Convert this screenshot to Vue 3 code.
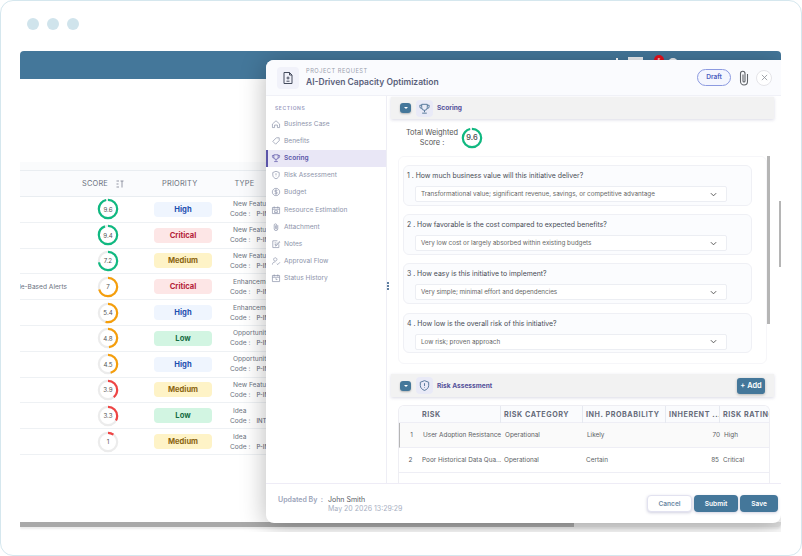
<script setup>
const rows = [
  { name: '', score: 9.6, priority: 'High', type: 'New Feature', code: 'P-INT-014' },
  { name: '', score: 9.4, priority: 'Critical', type: 'New Feature', code: 'P-INT-011' },
  { name: '', score: 7.2, priority: 'Medium', type: 'New Feature', code: 'P-INT-009' },
  { name: 'Role-Based Alerts', score: 7, priority: 'Critical', type: 'Enhancement', code: 'P-INT-008' },
  { name: '', score: 5.4, priority: 'High', type: 'Enhancement', code: 'P-INT-007' },
  { name: '', score: 4.8, priority: 'Low', type: 'Opportunity', code: 'P-INT-006' },
  { name: '', score: 4.5, priority: 'High', type: 'Opportunity', code: 'P-INT-005' },
  { name: '', score: 3.9, priority: 'Medium', type: 'New Feature', code: 'P-INT-004' },
  { name: '', score: 3.3, priority: 'Low', type: 'Idea', code: 'INT-003' },
  { name: '', score: 1, priority: 'Medium', type: 'Idea', code: 'P-INT-002' }
]

const sections = [
  { label: 'Business Case', d: 'M2 7 L7 2.5 L12 7 V12 H9 V8.5 H5 V12 H2 Z' },
  { label: 'Benefits', d: 'M7.5 2.5 H11.5 V6.5 L6.5 11.5 L2.5 7.5 Z M9.6 4.4 h.1' },
  { label: 'Scoring', d: 'M4 2.5 H10 V6 A3 3 0 0 1 4 6 Z M4 3.5 H2 V5 A2 2 0 0 0 4 7 M10 3.5 H12 V5 A2 2 0 0 1 10 7 M7 9 V11 M4.5 12 H9.5' },
  { label: 'Risk Assessment', d: 'M7 1.8 L11.5 3.5 V7 C11.5 9.6 9.5 11.4 7 12.3 C4.5 11.4 2.5 9.6 2.5 7 V3.5 Z M7 4.5 V7.5 M7 9 V9.4' },
  { label: 'Budget', d: 'M7 1.8 A5.2 5.2 0 1 0 7.01 1.8 Z M9 5 C8.4 4.2 5 4 5 5.7 C5 7.5 9 6.5 9 8.3 C9 10 5.6 9.8 5 9 M7 3.4 V10.6' },
  { label: 'Resource Estimation', d: 'M2 3.5 H12 V12 H2 Z M4.5 2 V5 M9.5 2 V5 M2 6 H12 M5 8 H9 V10.5 H5 Z' },
  { label: 'Attachment', d: 'M9.5 4.5 V9.5 A2.5 2.5 0 0 1 4.5 9.5 V4 A1.8 1.8 0 0 1 8 4 V9 A.8 .8 0 0 1 6.4 9 V4.8' },
  { label: 'Notes', d: 'M11 7.5 V12 H2.5 V2.5 H9 M5 5.5 H7.5 M5 8 H7 M6.5 10 L7 8 L11.5 3.5 L12.5 4.5 L8 9 Z' },
  { label: 'Approval Flow', d: 'M6 2.5 A2.3 2.3 0 1 0 6.01 2.5 Z M2 12 C2 9.5 3.8 8.3 6 8.3 M8 10.5 L9.5 12 L12.5 8.8' },
  { label: 'Status History', d: 'M2 3.5 H12 V12 H2 Z M4.5 2 V5 M9.5 2 V5 M2 6 H12 M7 7.2 V9.2 H9' }
]

const questions = [
  { q: 'How much business value will this initiative deliver?', a: 'Transformational value; significant revenue, savings, or competitive advantage' },
  { q: 'How favorable is the cost compared to expected benefits?', a: 'Very low cost or largely absorbed within existing budgets' },
  { q: 'How easy is this initiative to implement?', a: 'Very simple; minimal effort and dependencies' },
  { q: 'How low is the overall risk of this initiative?', a: 'Low risk; proven approach' }
]

const risks = [
  { risk: 'User Adoption Resistance', cat: 'Operational', prob: 'Likely', inherent: 70, rating: 'High' },
  { risk: 'Poor Historical Data Qua...', cat: 'Operational', prob: 'Certain', inherent: 85, rating: 'Critical' }
]

const circ = 2 * Math.PI * 10

function dash(score) {
  return `${(score / 10) * circ} ${circ}`
}

function ringColor(score) {
  if (score >= 7.2) return '#10b981'
  if (score >= 4) return '#f59e0b'
  return '#ef4444'
}
</script>

<template>
  <div class="frame">
    <div class="dots">
      <span></span><span></span><span></span>
    </div>

    <div class="window">
      <div class="topbar">
        <span class="tb-small"></span>
        <span class="tb-box"></span>
        <span class="tb-badge">5</span>
        <span class="tb-avatar"></span>
      </div>

      <div class="table">
        <div class="band"></div>
        <div class="thead">
          <span class="th-score">SCORE</span>
          <svg class="sort" viewBox="0 0 8 8" width="8" height="8">
            <path d="M0.5 1 H3 M0.5 4 H2.5 M0.5 7 H3 M4.5 1 H7.5 M6 1 V7.5" fill="none" stroke="#7b8290" stroke-width="0.8" />
          </svg>
          <span class="th-priority">PRIORITY</span>
          <span class="th-type">TYPE</span>
        </div>
        <div v-for="r in rows" :key="r.code" class="row">
          <div class="cell-name"><span>{{ r.name }}</span></div>
          <div class="ring">
            <svg viewBox="0 0 24 24" width="22" height="22">
              <circle cx="12" cy="12" r="10" fill="none" stroke="#ececec" stroke-width="2.4" />
              <circle
                cx="12" cy="12" r="10" fill="none"
                :stroke="ringColor(r.score)" stroke-width="2.4"
                :stroke-dasharray="dash(r.score)"
                transform="rotate(-90 12 12)"
              />
            </svg>
            <span>{{ r.score }}</span>
          </div>
          <span class="pill" :class="r.priority.toLowerCase()">{{ r.priority }}</span>
          <div class="type">
            <div class="type-name">{{ r.type }}</div>
            <div class="type-code"><span>Code :</span><b>{{ r.code }}</b></div>
          </div>
        </div>
      </div>

      <div class="hscroll"><div class="hthumb"></div></div>

      <!-- modal drawer over the list -->
      <div class="modal">
        <header class="m-head">
          <div class="doc-icon">
            <svg viewBox="0 0 14 14" width="14" height="14">
              <path d="M3 1.5 H8.5 L11 4 V12.5 H3 Z M8.5 1.5 V4 H11 M7 5.5 V8.5 M5.5 7 H8.5 M5.5 10.2 H8.5" fill="none" stroke="#444b5c" stroke-width="1" />
            </svg>
          </div>
          <div class="m-titles">
            <div class="m-over">PROJECT REQUEST</div>
            <div class="m-title">AI-Driven Capacity Optimization</div>
          </div>
          <span class="draft">Draft</span>
          <svg class="clip" viewBox="0 0 10 16" width="10" height="16">
            <path d="M8.5 4 V11.5 A3.5 3.5 0 0 1 1.5 11.5 V3.5 A2.2 2.2 0 0 1 6 3.5 V11 A1 1 0 0 1 4 11 V4.5" fill="none" stroke="#5f6368" stroke-width="1.1" />
          </svg>
          <button class="close">
            <svg viewBox="0 0 8 8" width="7" height="7">
              <path d="M1 1 L7 7 M7 1 L1 7" stroke="#8b8f97" stroke-width="0.9" />
            </svg>
          </button>
        </header>

        <div class="m-body">
          <aside class="side">
            <div class="side-title">SECTIONS</div>
            <a v-for="s in sections" :key="s.label" class="side-item" :class="{ active: s.label === 'Scoring' }">
              <svg viewBox="0 0 14 14" width="10" height="10">
                <path :d="s.d" fill="none" stroke="currentColor" stroke-width="1" />
              </svg>
              <span>{{ s.label }}</span>
            </a>
          </aside>

          <span class="grip"><i></i><i></i><i></i></span>

          <main class="content">
            <div class="sec-head">
              <span class="toggle"></span>
              <span class="sec-icon">
                <svg viewBox="0 0 14 14" width="13" height="13">
                  <path d="M4 2.5 H10 V6 A3 3 0 0 1 4 6 Z M4 3.5 H2 V5 A2 2 0 0 0 4 7 M10 3.5 H12 V5 A2 2 0 0 1 10 7 M7 9 V11 M4.5 12 H9.5" fill="none" stroke="#4f7396" stroke-width="1" />
                </svg>
              </span>
              <span class="sec-name">Scoring</span>
            </div>

            <div class="total">
              <div class="total-label">Total Weighted<br />Score :</div>
              <div class="ring total-ring">
                <svg viewBox="0 0 24 24" width="22" height="22">
                  <circle cx="12" cy="12" r="10" fill="none" stroke="#ececec" stroke-width="2.4" />
                  <circle cx="12" cy="12" r="10" fill="none" stroke="#10b981" stroke-width="2.4" :stroke-dasharray="dash(9.6)" transform="rotate(-90 12 12)" />
                </svg>
                <span>9.6</span>
              </div>
            </div>

            <div class="q-panel">
              <div v-for="(item, i) in questions" :key="item.q" class="q-card">
                <div class="q-text">{{ i + 1 }} . {{ item.q }}</div>
                <div class="q-select">
                  <span>{{ item.a }}</span>
                  <svg viewBox="0 0 8 5" width="7" height="5">
                    <path d="M1 1 L4 4 L7 1" fill="none" stroke="#555" stroke-width="1.1" />
                  </svg>
                </div>
              </div>
            </div>

            <div class="sec-head risk-head">
              <span class="toggle"></span>
              <span class="sec-icon">
                <svg viewBox="0 0 14 14" width="13" height="13">
                  <path d="M7 1.8 L11.5 3.5 V7 C11.5 9.6 9.5 11.4 7 12.3 C4.5 11.4 2.5 9.6 2.5 7 V3.5 Z M7 4.5 V7.5 M7 9 V9.6" fill="none" stroke="#4f7396" stroke-width="1" />
                </svg>
              </span>
              <span class="sec-name">Risk Assessment</span>
              <button class="add">+ Add</button>
            </div>

            <div class="risk-table">
              <div class="risk-row risk-th">
                <span></span>
                <span>RISK</span>
                <span>RISK CATEGORY</span>
                <span>INH. PROBABILITY</span>
                <span>INHERENT ...</span>
                <span>RISK RATING</span>
              </div>
              <div v-for="(r, i) in risks" :key="r.risk" class="risk-row" :class="{ selected: i === 0 }">
                <span class="num">{{ i + 1 }}</span>
                <span class="risk-name">{{ r.risk }}</span>
                <span>{{ r.cat }}</span>
                <span>{{ r.prob }}</span>
                <span class="right">{{ r.inherent }}</span>
                <span>{{ r.rating }}</span>
              </div>
            </div>

            <div class="vscroll"></div>
            <div class="vscroll-2"></div>
          </main>
        </div>

        <footer class="m-foot">
          <span class="upd">Updated By&nbsp; :</span>
          <div class="upd-who">
            <div class="upd-name">John Smith</div>
            <div class="upd-date">May 20 2026 13:29:29</div>
          </div>
          <button class="btn cancel">Cancel</button>
          <button class="btn">Submit</button>
          <button class="btn save">Save</button>
        </footer>
      </div>
    </div>
  </div>
</template>

<style>
html,
body {
  margin: 0;
  background: #fff;
}
</style>

<style scoped>
* {
  box-sizing: border-box;
}

.frame {
  width: 802px;
  height: 556px;
  border: 1px solid #d5e7ee;
  border-radius: 13px;
  padding: 17px 20px 0 19px;
  overflow: hidden;
  font-family: Inter, "Noto Sans", sans-serif;
  background: #fff;
}

.dots {
  display: flex;
  gap: 8px;
  margin-left: 7px;
  height: 12px;
}

.dots span {
  width: 12px;
  height: 12px;
  border-radius: 50%;
  background: #d0e4ec;
}

.window {
  position: relative;
  margin-top: 21px;
  height: 481px;
  display: flex;
  flex-direction: column;
  overflow: hidden;
  border-radius: 4px 4px 0 0;
}

.topbar {
  height: 28px;
  flex: none;
  background: #44779a;
  display: flex;
  justify-content: flex-end;
  padding: 4px 103px 0 0;
}

.tb-small {
  width: 2px;
  height: 4px;
  margin: 3px 10px 0 0;
  background: #fff;
}

.tb-box {
  width: 15px;
  height: 12px;
  margin: 2px 11px 0 0;
  background: #eef1f4;
}

.tb-badge {
  width: 10px;
  height: 10px;
  border-radius: 50%;
  background: #e8101c;
  color: #fff;
  font-size: 5px;
  line-height: 10px;
  text-align: center;
}

.tb-avatar {
  width: 10px;
  height: 10px;
  margin: 3px 0 0 4px;
  border-radius: 50%;
  background: #eef1f4;
}

.table {
  margin-top: 83px;
}

.band {
  height: 8px;
  background: #fafbfc;
}

.thead {
  height: 27px;
  display: flex;
  align-items: center;
  background: #fafbfd;
  border-top: 1px solid #e9edf1;
  border-bottom: 1px solid #e9edf1;
  font-size: 7.4px;
  color: #6b7280;
  letter-spacing: 0.2px;
}

.th-score {
  margin-left: 62px;
}

.sort {
  margin-left: 8px;
}

.th-priority {
  margin-left: 38px;
}

.th-type {
  margin-left: 37px;
}

.row {
  height: 25.8px;
  display: flex;
  align-items: center;
  border-bottom: 1px solid #eef1f4;
}

.cell-name {
  width: 77px;
  flex: none;
  display: flex;
  justify-content: flex-end;
  overflow: hidden;
  white-space: nowrap;
  padding-right: 30px;
  font-size: 6.6px;
  color: #6b7280;
}

.ring {
  position: relative;
  width: 22px;
  height: 22px;
  flex: none;
  display: flex;
  align-items: center;
  justify-content: center;
  font-size: 6.2px;
  color: #555;
}

.ring svg {
  position: absolute;
  inset: 0;
}

.pill {
  width: 58px;
  height: 15px;
  margin-left: 35px;
  flex: none;
  border-radius: 4px;
  text-align: center;
  font-size: 7.6px;
  font-weight: 700;
  line-height: 15px;
}

.high {
  background: #eff5fe;
  color: #1d4fb0;
}

.critical {
  background: #fde6e6;
  color: #b4233a;
}

.medium {
  background: #fef3c7;
  color: #8a6510;
}

.low {
  background: #d2f5e2;
  color: #166c45;
}

.type {
  margin-left: 18px;
  font-size: 6.6px;
  color: #6b7280;
  white-space: nowrap;
}

.type-name {
  margin-left: 3px;
  line-height: 10px;
}

.type-code {
  display: flex;
  gap: 6px;
  line-height: 10px;
}

.type-code b {
  font-weight: 500;
  font-size: 6px;
}

.hscroll {
  margin-top: auto;
  margin-bottom: 5px;
  height: 5px;
  background: #e3e3e3;
  box-shadow: 0 2px 2px rgba(0, 0, 0, 0.08);
  border-bottom-right-radius: 4px;
}

.hthumb {
  width: 554px;
  height: 5px;
  background: #a9a9a9;
}

.modal {
  position: absolute;
  left: 246px;
  top: 9px;
  width: 515px;
  height: 463px;
  display: flex;
  flex-direction: column;
  background: #fff;
  border-radius: 8px 0 8px 8px;
  box-shadow: 0 3px 26px rgba(0, 0, 0, 0.28);
}

.m-head {
  height: 36px;
  flex: none;
  display: flex;
  align-items: center;
  padding: 0 9px 0 11px;
  background: #fafbfe;
  border-radius: 8px 0 0 0;
  border-bottom: 1px solid #f0f1f7;
}

.doc-icon {
  width: 22px;
  height: 22px;
  display: flex;
  align-items: center;
  justify-content: center;
  border-radius: 4px;
  background: #f1f2fa;
}

.m-titles {
  margin-left: 7px;
  flex: 1;
}

.m-over {
  font-size: 5.7px;
  letter-spacing: 0.5px;
  color: #9a9fae;
  line-height: 8px;
}

.m-title {
  font-size: 8.5px;
  font-weight: 600;
  color: #59607a;
  line-height: 12px;
  margin-top: 1px;
}

.draft {
  width: 34px;
  height: 17px;
  border: 1px solid #8c9ae0;
  border-radius: 9px;
  background: #f4f6fe;
  color: #4a5fc0;
  font-size: 6.6px;
  font-weight: 600;
  line-height: 15px;
  text-align: center;
}

.clip {
  margin-left: 8px;
}

.close {
  width: 16px;
  height: 16px;
  margin-left: 7px;
  padding: 0;
  display: flex;
  align-items: center;
  justify-content: center;
  border: 1px solid #e4e4e8;
  border-radius: 50%;
  background: #fff;
}

.m-body {
  flex: 1;
  min-height: 0;
  display: flex;
  position: relative;
}

.side {
  width: 121px;
  flex: none;
  border-right: 1px solid #eeeef5;
  padding-top: 9px;
}

.side-title {
  margin: 0 0 3.5px 9px;
  font-size: 5px;
  font-weight: 600;
  letter-spacing: 0.6px;
  color: #9a9bc0;
  line-height: 7px;
}

.side-item {
  height: 17.1px;
  display: flex;
  align-items: center;
  gap: 3px;
  padding-left: 5px;
  font-size: 6.6px;
  color: #8d94aa;
}

.side-item.active {
  background: #e9e7f6;
  border-left: 2px solid #5b55a8;
  padding-left: 3px;
  color: #5b55a8;
  font-weight: 600;
}

.grip {
  position: absolute;
  left: 121px;
  top: 186px;
  display: flex;
  flex-direction: column;
  gap: 1px;
}

.grip i {
  width: 2px;
  height: 2px;
  background: #5f7fa0;
}

.content {
  position: relative;
  flex: 1;
  min-width: 0;
  overflow: hidden;
  padding: 1px 7px 0 4px;
}

.sec-head {
  height: 22px;
  display: flex;
  align-items: center;
  padding-left: 9px;
  background: #f2f2f2;
  box-shadow: 0 1px 3px rgba(90, 90, 140, 0.22);
}

.toggle {
  width: 11px;
  height: 10px;
  border-radius: 3px;
  background: #44779a;
  display: flex;
  align-items: center;
  justify-content: center;
  box-shadow: 0 1px 2px rgba(0, 0, 0, 0.25);
}

.toggle::before {
  content: "";
  border-left: 2.5px solid transparent;
  border-right: 2.5px solid transparent;
  border-top: 2.5px solid #fff;
}

.sec-icon {
  width: 17px;
  height: 17px;
  margin-left: 5px;
  display: flex;
  align-items: center;
  justify-content: center;
  border-radius: 4px;
  background: #e9eaf7;
}

.sec-name {
  margin-left: 4px;
  font-size: 6.6px;
  font-weight: 700;
  color: #54509a;
}

.total {
  height: 37px;
  display: flex;
  align-items: center;
}

.total-label {
  width: 58px;
  margin-left: 12px;
  text-align: center;
  font-size: 7.4px;
  line-height: 10px;
  color: #555;
  white-space: nowrap;
}

.total-ring {
  margin-left: 0;
  font-size: 7.4px;
  font-weight: 600;
}

.q-panel {
  width: 369px;
  height: 208px;
  margin-left: 7px;
  padding: 8px 14px 0 4px;
  border: 1px solid #f6f6f9;
  border-radius: 6px;
  display: flex;
  flex-direction: column;
  gap: 8.6px;
}

.q-card {
  height: 40.6px;
  padding: 5px 24px 0 3px;
  border: 1px solid #eff0f5;
  border-radius: 6px;
  background: #fbfcfe;
}

.q-text {
  font-size: 6.9px;
  line-height: 9px;
  color: #484c55;
  white-space: nowrap;
}

.q-select {
  height: 16px;
  margin: 6px 0 0 8px;
  padding: 0 9px 0 5px;
  display: flex;
  align-items: center;
  justify-content: space-between;
  border: 1px solid #eceef3;
  border-radius: 2px;
  background: #fff;
  font-size: 6.3px;
  color: #666;
}

.risk-head {
  margin-top: 10px;
  width: 383px;
  height: 23px;
  padding-right: 9px;
}

.add {
  margin-left: auto;
  width: 28px;
  height: 16px;
  padding: 0;
  border: none;
  border-radius: 3px;
  background: #44779a;
  color: #fff;
  font-family: inherit;
  font-size: 7.4px;
  font-weight: 600;
  box-shadow: 0 1px 3px rgba(0, 0, 0, 0.25);
}

.risk-table {
  margin: 8px 0 0 7px;
  width: 372px;
  height: 90px;
  border: 1px solid #eeeef3;
  border-bottom: none;
  border-radius: 6px 6px 0 0;
  overflow: hidden;
}

.risk-row {
  height: 25px;
  display: grid;
  grid-template-columns: 23px 79px 82px 83px 54px 1fr;
  align-items: center;
  border-bottom: 1px solid #eeeef5;
  font-size: 6.4px;
  color: #5d5f66;
  white-space: nowrap;
}

.risk-row span {
  overflow: hidden;
  padding-left: 3px;
}

.risk-row .num {
  padding: 0;
  text-align: center;
}

.risk-row .risk-name {
  padding-left: 0;
}

.risk-row .right {
  text-align: right;
  padding-right: 1px;
}

.risk-th {
  height: 17px;
  background: #fafbfd;
  font-size: 7.2px;
  font-weight: 700;
  letter-spacing: 0.55px;
  color: #666b7a;
}

.risk-th span + span {
  height: 17px;
  line-height: 17px;
  border-right: 1px solid #e6e9f0;
}

.risk-th span:nth-child(2) {
  padding-left: 0;
}

.risk-th span:last-child {
  border-right: none;
}

.selected {
  background: #fafafa;
  border-left: 1px solid #b5b5b5;
}

.vscroll {
  position: absolute;
  left: 380px;
  top: 60px;
  width: 3px;
  height: 168px;
  background: #b5b5b5;
}

.vscroll-2 {
  position: absolute;
  left: 392px;
  top: 105px;
  width: 2px;
  height: 66px;
  background: #b5b5b5;
}

.m-foot {
  height: 40px;
  flex: none;
  display: flex;
  align-items: center;
  padding: 0 3px 0 12px;
  border-top: 1px solid #eeecf6;
  font-size: 7px;
}

.upd {
  width: 50px;
  align-self: flex-start;
  margin-top: 11px;
  font-weight: 600;
  color: #9ca4ba;
  white-space: nowrap;
}

.upd-who {
  flex: 1;
  line-height: 9px;
}

.upd-name {
  color: #585b63;
}

.upd-date {
  color: #a8afc2;
}

.btn {
  width: 44px;
  height: 17px;
  margin-left: 2px;
  padding: 0;
  border: none;
  border-radius: 4px;
  background: #44779a;
  color: #fff;
  font-family: inherit;
  font-size: 6.6px;
  font-weight: 600;
  box-shadow: 0 1px 3px rgba(70, 70, 130, 0.25);
}

.cancel {
  width: 45px;
  background: #fff;
  color: #6d8aa5;
  border: 1px solid #e2e2f0;
}

.save {
  width: 38px;
}
</style>
